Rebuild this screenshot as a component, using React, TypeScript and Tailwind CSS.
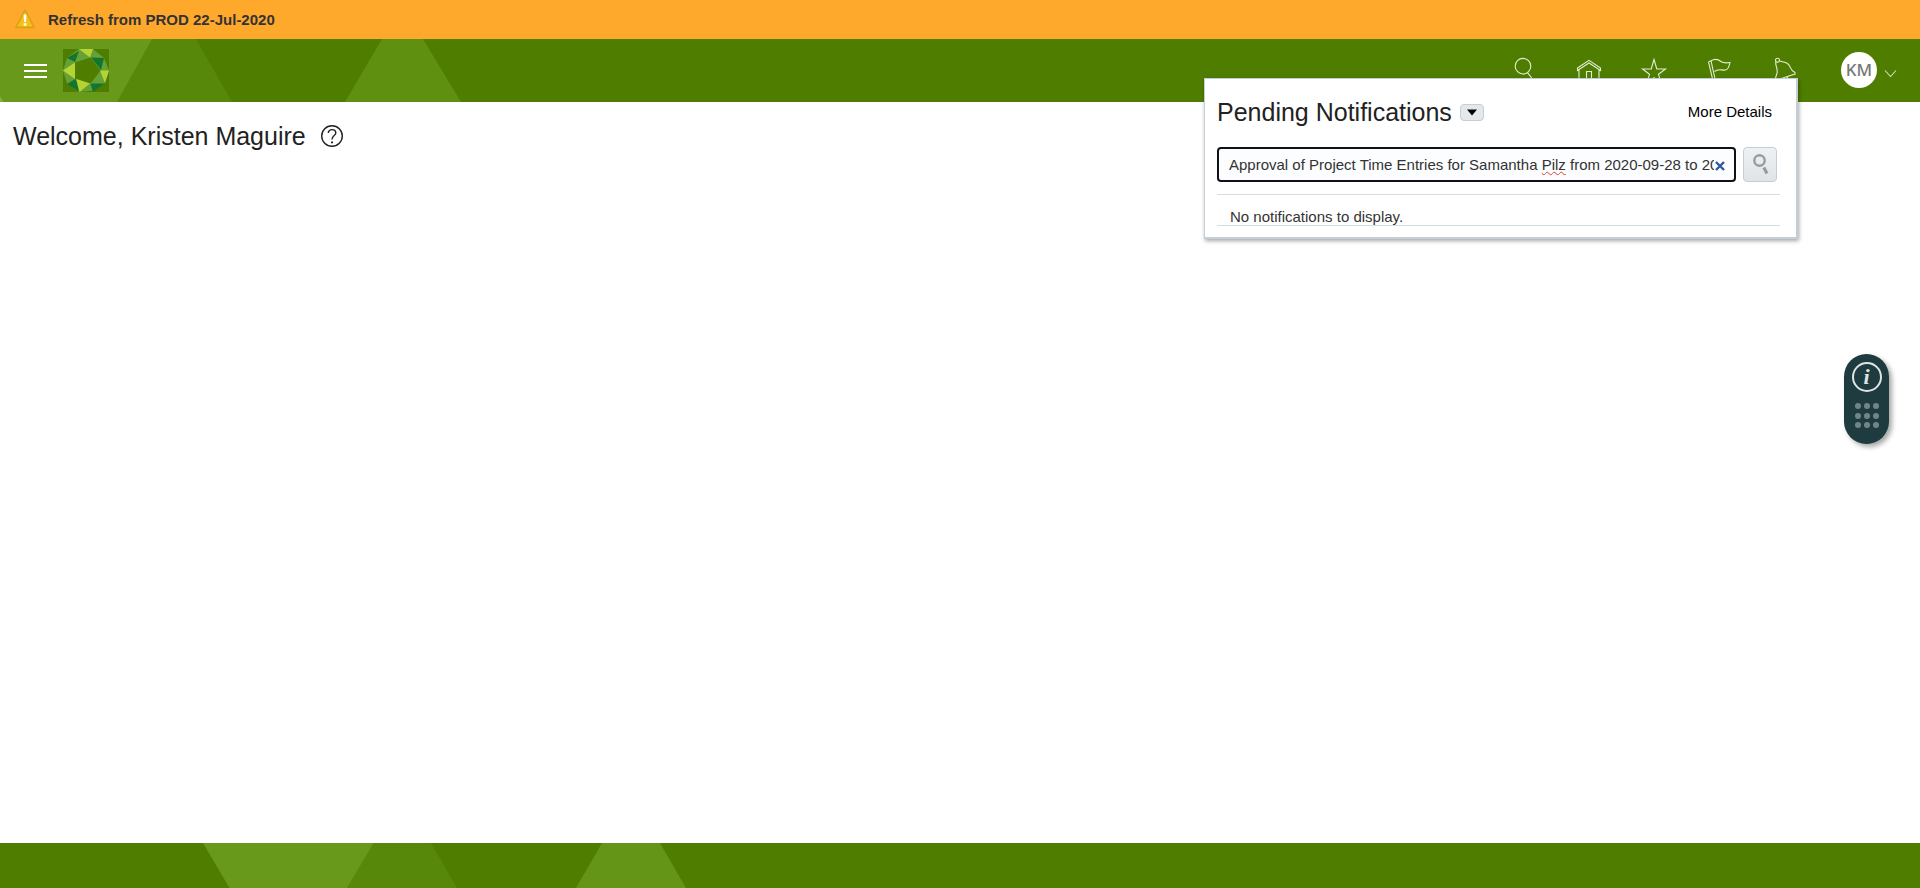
import React from 'react';

function WarningIcon() {
  return (
    <svg className="mb-px h-5 w-5 shrink-0" viewBox="0 0 20 20">
      <path d="M10 1.2 L19.2 18.4 H0.8 Z" fill="#f5c018" stroke="#dca017" strokeWidth="1.6" strokeLinejoin="round" />
      <path d="M8.6 5.4 H11.5 L11 13 H9.1 Z M8.7 14.2 H11.4 V16.7 H8.7 Z" fill="#fff" />
    </svg>
  );
}

function Logo() {
  return (
    <svg className="h-[43px] w-[46px] shrink-0" viewBox="0 0 46 43">
      <rect width="46" height="43" fill="#4f7d00" />
      <path d="M16 0 H30 L41 9 L46 21.5 L42 34 L30 41.5 L16 43 L4 34.5 L0 21.5 L4 9 Z" fill="#66a138" />
      <path d="M16 0 H30 L27 8.5 Z" fill="#b5d433" />
      <path d="M4 9 L16 2 L12 13 Z" fill="#14752f" />
      <path d="M28 8.5 L41 9 L38 21 Z" fill="#14752f" />
      <path d="M37 21.5 L46 21.5 L42 34 Z" fill="#b5d433" />
      <path d="M0 21.5 L12 13.5 V30 Z" fill="#b5d433" />
      <path d="M4 35 L13 29.5 L16 42.5 Z" fill="#14752f" />
      <path d="M13 29.5 L27.5 34 L16.5 43 Z" fill="#b5d433" />
      <path d="M27.5 34.5 L41.5 34.5 L30 43 Z" fill="#14752f" />
      <path d="M12 13.5 L27.5 8.5 L37.5 21.5 L27.5 34.5 L12 29.5 Z" fill="#4f7d00" />
    </svg>
  );
}

function NavIcon({ children }: { children: React.ReactNode }) {
  return (
    <svg className="h-7 w-7 shrink-0" viewBox="0 0 28 28" fill="none" stroke="#e3edd2" strokeWidth="1.1">
      {children}
    </svg>
  );
}

function Header() {
  return (
    <header className="relative flex h-[63px] shrink-0 items-start bg-[#4f7d00]">
      <svg className="absolute left-0 top-0 h-[63px] w-[480px]" viewBox="0 0 480 63">
        <path d="M0 0 H196 L232 63 H0 Z" fill="#58880a" />
        <path d="M0 0 H152 L117 63 H0 Z" fill="#68991a" />
        <path d="M0 57 L3.5 63 H0 Z" fill="#84ad45" />
        <path d="M382 0 H423 L461 63 H345 Z" fill="#609010" />
      </svg>
      <div className="relative flex flex-1 items-start">
        <div className="ml-6 mt-[25px] flex w-[23px] flex-col gap-1">
          <span className="h-0.5 bg-white" />
          <span className="h-0.5 bg-white" />
          <span className="h-0.5 bg-white" />
        </div>
        <div className="ml-4 mt-2.5"><Logo /></div>
      </div>
      <div className="flex gap-[37px] pt-[17px]">
        <NavIcon><circle cx="13" cy="10.2" r="7.8" /><path d="M17.500 16.700 L24 25" /></NavIcon>
        <NavIcon>
          <path d="M2.5 12 L14 4.3 L25.5 12 V14.5 L14 7 L2.5 14.5 Z M4 14 V27 H24 V14 M11.5 27 V15.5 H16.5 V27" />
        </NavIcon>
        <NavIcon><path d="M14 3.5 L16.8 13 H25.5 L18.5 18.3 L21.2 27 L14 21.8 L6.8 27 L9.5 18.3 L2.5 13 H11.2 Z" /></NavIcon>
        <NavIcon>
          <path d="M3.5 5.8 L8.5 27 M6 4.8 L11 27 M3.5 5.8 L6 4.8 C10.5 2 13.5 3.5 16 5.5 C18.5 7.5 21.5 7 25 6.5 C24.5 9 23.5 13.5 20.5 14 C17 14.7 13.5 12 9.5 15.5" />
        </NavIcon>
        <NavIcon>
          <circle cx="7.5" cy="4.2" r="2" />
          <path d="M5.7 6 C5.5 10 7.5 12 7.2 16 C7 19 5.5 20 5 24.5 L25 18 V16.5 C19 13.5 21.5 10.5 17.5 7.5 C15 5.5 12.5 6 9.5 5 M13 22 Q15 26 18 20.5" />
        </NavIcon>
      </div>
      <div className="ml-[43px] mt-[13px] flex h-9 w-9 items-center justify-center rounded-full bg-white [font-family:'Noto_Sans','Open_Sans',sans-serif] text-[17px] font-medium text-[#777]">
        KM
      </div>
      <svg className="ml-[7px] mr-[23px] mt-[30px] h-2.5 w-[13px]" viewBox="0 0 13 10" fill="none" stroke="#d5e2bd" strokeWidth="1.1">
        <path d="M1 1.5 L6.5 7.5 L12 1.5" />
      </svg>
    </header>
  );
}

function NotificationsPopup() {
  return (
    <section className="absolute left-[1204px] top-[78px] flex h-[161px] w-[594px] flex-col border border-b-2 border-r-2 border-[#c4ced7] bg-white pl-3 pr-4 shadow-[1px_2px_4px_rgba(0,0,0,0.35)]">
      <div className="flex h-[68px] shrink-0 items-center">
        <h2 className="pb-0.5 text-[25px] leading-7 text-[#222]">Pending Notifications</h2>
        <button className="mb-0.5 ml-2 flex h-[17px] w-6 items-center justify-center rounded border border-[#c4ced7] bg-[#e4e8ea]">
          <svg className="h-[7px] w-2.5" viewBox="0 0 10 7"><path d="M0 0.5 H10 L5 6.5 Z" fill="#000" /></svg>
        </button>
        <a className="mb-0.5 ml-auto mr-2 text-[15px] text-black">More Details</a>
      </div>
      <div className="flex h-[35px] shrink-0 gap-[7px]">
        <div className="flex w-[519px] items-center rounded border-2 border-[#101114] bg-[#fcfdff] pl-2.5">
          <div className="w-[485px] shrink-0 overflow-hidden whitespace-nowrap text-[15px] leading-6 text-[#333]">
            Approval of Project Time Entries for Samantha{' '}
            <span className="underline decoration-[#e53935] decoration-wavy decoration-1 underline-offset-1">Pilz</span> from 2020-09-28 to 20
          </div>
          <svg className="ml-px mt-0.5 h-2.5 w-2.5 shrink-0" viewBox="0 0 10 10" stroke="#34569c" strokeWidth="2.4">
            <path d="M1 1 L9 9 M9 1 L1 9" />
          </svg>
        </div>
        <button className="flex w-[34px] items-start justify-center rounded border border-[#c4ced7] bg-linear-to-b from-[#eff1f3] to-[#dfe4e7]">
          <svg className="mt-[5px] h-[22px] w-5" viewBox="0 0 20 22" fill="none" stroke="#989b9d">
            <circle cx="9.5" cy="7.5" r="5.2" strokeWidth="2.4" />
            <path d="M13.8 14.5 L17 20.5" strokeWidth="3.2" />
          </svg>
        </button>
      </div>
      <div className="mt-3 h-8 w-[563px] shrink-0 border-y border-[#d3dde4] pl-[13px] pt-3 text-[15px] leading-5 text-[#333]">
        No notifications to display.
      </div>
    </section>
  );
}

function HelpDock() {
  return (
    <aside className="absolute left-[1844px] top-[354px] flex h-[90px] w-[45px] flex-col items-center rounded-full bg-[#1e3c40] pt-2 shadow-[3px_3px_5px_rgba(0,0,0,0.35)]">
      <div className="flex h-[30px] w-[30px] items-center justify-center rounded-full border-2 border-[#dfe5e4] pb-px font-['Liberation_Serif',serif] text-[22px] font-bold italic leading-none text-[#dfe5e4]">
        i
      </div>
      <div className="mt-[11px] grid grid-cols-3 gap-x-[3px] gap-y-[3.5px]">
        {Array.from({ length: 9 }, (_, i) => (
          <span key={i} className="h-1.5 w-1.5 rounded-full bg-[#718589]" />
        ))}
      </div>
    </aside>
  );
}

export default function App() {
  return (
    <div className="relative flex h-[888px] w-[1920px] flex-col overflow-hidden bg-white font-['Liberation_Sans',Arial,sans-serif]">
      <div className="flex h-[39px] shrink-0 items-center bg-[#ffa92c] pl-[15px]">
        <WarningIcon />
        <span className="ml-[13px] mt-px text-[15px] font-bold text-[#333]">Refresh from PROD 22-Jul-2020</span>
      </div>
      <Header />
      <main className="flex flex-1 items-start pl-[13px] pt-[18px]">
        <h1 className="text-[25px] leading-8 text-[#222]">Welcome, Kristen Maguire</h1>
        <svg className="ml-3.5 mt-1 h-6 w-6" viewBox="0 0 24 24" fill="none" stroke="#222" strokeWidth="1.4">
          <circle cx="12" cy="12" r="10.3" />
          <path d="M8.3 9 C8.3 4.4 15.8 4.5 15.8 9 C15.8 11.7 12 11.6 12 15.5" />
          <path d="M12 17.5 V19.2" strokeWidth="2" />
        </svg>
      </main>
      <footer className="h-[45px] shrink-0 bg-[#4f7d00]">
        <svg className="h-[45px] w-[720px]" viewBox="0 0 720 45">
          <path d="M373 0 H431 L457 45 H347 Z" fill="#58880a" />
          <path d="M203 0 H373.5 L347 45 H229.5 Z" fill="#68991a" />
          <path d="M602 0 H660 L686 45 H576 Z" fill="#649516" />
        </svg>
      </footer>
      <NotificationsPopup />
      <HelpDock />
    </div>
  );
}
